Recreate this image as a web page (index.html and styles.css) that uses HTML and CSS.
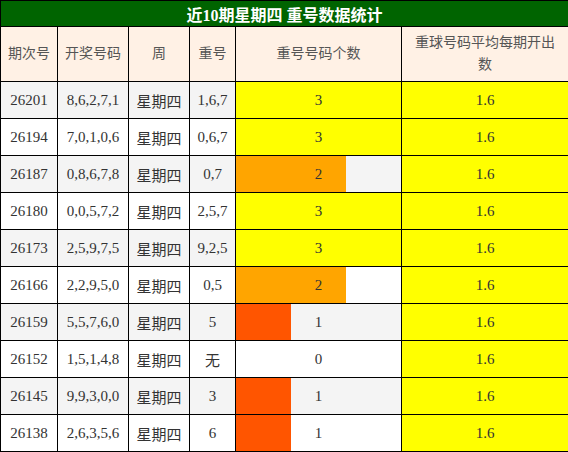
FILE: index.html
```html
<!DOCTYPE html>
<html lang="zh-CN">
<head>
    <meta charset="UTF-8">
    <title>近10期星期四 重号数据统计</title>
    <link rel="stylesheet" href="styles.css">
</head>
<body>
    <table class="stat-table">
        <colgroup>
            <col class="c-issue">
            <col class="c-nums">
            <col class="c-week">
            <col class="c-rep">
            <col class="c-bar">
            <col class="c-avg">
        </colgroup>
        <thead>
            <tr><th class="title" colspan="6">近10期星期四 重号数据统计</th></tr>
            <tr class="head">
                <th>期次号</th>
                <th>开奖号码</th>
                <th>周</th>
                <th>重号</th>
                <th>重号号码个数</th>
                <th class="wrap">重球号码平均每期开出数</th>
            </tr>
        </thead>
        <tbody id="rows"></tbody>
    </table>

    <script>
        var data = [
            ['26201', '8,6,2,7,1', '1,6,7', 3],
            ['26194', '7,0,1,0,6', '0,6,7', 3],
            ['26187', '0,8,6,7,8', '0,7', 2],
            ['26180', '0,0,5,7,2', '2,5,7', 3],
            ['26173', '2,5,9,7,5', '9,2,5', 3],
            ['26166', '2,2,9,5,0', '0,5', 2],
            ['26159', '5,5,7,6,0', '5', 1],
            ['26152', '1,5,1,4,8', '无', 0],
            ['26145', '9,9,3,0,0', '3', 1],
            ['26138', '2,6,3,5,6', '6', 1]
        ];
        var colors = ['transparent', '#ff5500', '#ffa500', '#ffff00'];
        var body = document.getElementById('rows');
        data.forEach(function (d) {
            var row = document.createElement('tr');
            var pct = (d[3] / 3 * 100).toFixed(2);
            row.innerHTML = `
                <td>${d[0]}</td>
                <td>${d[1]}</td>
                <td>星期四</td>
                <td>${d[2]}</td>
                <td class="bar-cell">
                    <div class="bar" style="width:${pct}%;background:${colors[d[3]]}"></div>
                    <span class="bar-num">${d[3]}</span>
                </td>
                <td class="avg">1.6</td>
            `;
            body.appendChild(row);
        });
    </script>
</body>
</html>
```

FILE: styles.css
```css
body {
    margin: 0;
    font-family: "Liberation Serif", "Noto Sans CJK SC", serif;
}
.stat-table {
    width: 568px;
    border-collapse: collapse;
    table-layout: fixed;
    color: #333;
    font-size: 15px;
}
.c-issue { width: 57px; }
.c-nums { width: 71px; }
.c-week { width: 61px; }
.c-rep { width: 46px; }
.c-bar { width: 166px; }
.c-avg { width: 167px; }

.stat-table th,
.stat-table td {
    border: 1px solid #000;
    text-align: center;
    padding: 0;
}
.title {
    background-color: #006400;
    color: #fff;
    font-size: 16px;
    font-weight: bold;
    height: 25px;
}
.head th {
    background-color: #fff1e5;
    color: #555;
    font-weight: normal;
    font-size: 14px;
    height: 54px;
    line-height: 22px;
    padding: 0 6px;
}
.head th.wrap {
    padding: 0 13px;
}
.stat-table td {
    height: 36px;
}
tbody tr:nth-child(odd) {
    background-color: #f4f4f4;
}
tbody tr:nth-child(even) {
    background-color: #fff;
}
.bar-cell {
    position: relative;
}
.bar {
    position: absolute;
    left: 0;
    top: 0;
    bottom: 0;
}
.bar-num {
    position: relative;
}
.avg {
    background-color: #ffff00;
}
```
